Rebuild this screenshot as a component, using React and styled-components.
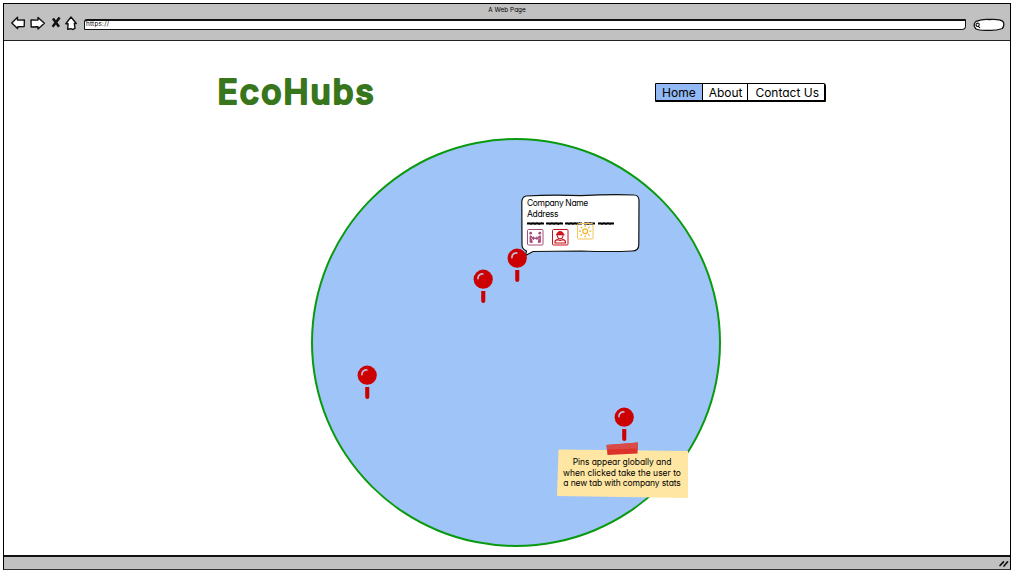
import React from "react";
import styled, { createGlobalStyle } from "styled-components";

const GlobalStyle = createGlobalStyle`
  * { box-sizing: border-box; }
  body { margin: 0; background: #fff; overflow: hidden; }
  #root {
    font-family: Inter, "Liberation Sans", sans-serif;
    font-feature-settings: "cv11";
    color: #000;
  }
`;

const BrowserWindow = styled.div`
  display: flex;
  flex-direction: column;
  width: 1008px;
  height: 567px;
  margin: 3px 0 0 3px;
  border: 1.5px solid #000;
  border-bottom-color: #333;
`;

const Chrome = styled.header`
  flex: 0 0 37px;
  background: #c1c1c1;
  border-bottom: 1px solid #222;
`;

const WindowTitle = styled.div`
  height: 12px;
  line-height: 12px;
  text-align: center;
  font-size: 6.4px;
  letter-spacing: 0.05px;
`;

const ToolRow = styled.div`
  display: flex;
  align-items: center;
  height: 16px;
  padding: 0 4px 0 7px;
`;

const Tools = styled.svg`
  display: block;
  width: 68px;
  height: 16px;
  margin: -1px 5px 0 0;
`;

const AddressBar = styled.div`
  width: 882px;
  height: 11px;
  margin-top: 1px;
  padding-left: 1px;
  background: #fff;
  border: 1.3px solid #111;
  border-top-width: 2px;
  border-radius: 3px 1px 4px 1px;
  font-size: 6.4px;
  line-height: 7px;
  letter-spacing: 0.2px;
`;

const SearchBox = styled.svg`
  display: block;
  width: 32px;
  height: 14px;
  margin: 1px 0 0 7px;
`;

const Page = styled.main`
  flex: 1;
  background: #fff;
`;

const Header = styled.div`
  display: flex;
  justify-content: space-between;
  height: 97px;
  padding: 34px 184px 0 214px;
`;

const Brand = styled.h1`
  margin: 0;
  width: 160px;
  height: 36px;
`;

const BrandMark = styled.svg`
  display: block;
  width: 160px;
  height: 36px;
  overflow: visible;
  font-size: 33.5px;
  font-weight: 500;
  fill: #38761d;
  stroke: #38761d;
  stroke-width: 2.2px;
  stroke-linejoin: round;
`;

const Nav = styled.nav`
  display: flex;
  width: 171px;
  height: 19px;
  margin-top: 8px;
  border: 1px solid #000;
  border-width: 1px 2px 2px 1px;
  border-radius: 1px 3px 1px 1px;
`;

const NavItem = styled.a`
  width: ${(p) => p.$width}px;
  padding-left: ${(p) => p.$inset || 0}px;
  background: ${(p) => (p.$active ? "#92b9f4" : "#fff")};
  border-right: ${(p) => (p.$last ? 0 : "1px solid #000")};
  text-align: center;
  white-space: nowrap;
  font-size: 12px;
  line-height: 17px;
`;

const Globe = styled.section`
  position: relative;
  width: 410px;
  height: 409px;
  margin-left: 307px;
  border: 2px solid #0a9a0f;
  border-radius: 50%;
  background: #9fc4f8;
`;

const PinMark = styled.svg`
  position: absolute;
  left: ${(p) => p.$x}px;
  top: ${(p) => p.$y}px;
  width: 20px;
  height: 35px;
`;

const Callout = styled.div`
  position: absolute;
  left: 208px;
  top: 54px;
  width: 120px;
  height: 65px;
  padding: 4px 0 0 6px;
  font-size: 8.5px;
  line-height: 11px;
`;

const CalloutShape = styled.svg`
  position: absolute;
  inset: 0;
  width: 120px;
  height: 65px;
`;

const CalloutLine = styled.div`
  position: relative;
  white-space: nowrap;
  letter-spacing: ${(p) => p.$track || 0}px;
`;

const Scribble = styled.svg`
  position: relative;
  display: block;
  width: 90px;
  height: 5px;
  margin-top: 1px;
`;

const IconRow = styled.div`
  position: relative;
  display: flex;
  gap: 8px;
  padding-top: 3px;
`;

const Badge = styled.svg`
  width: 17px;
  height: 17px;
  margin-top: ${(p) => p.$shift}px;
`;

const Note = styled.div`
  position: absolute;
  left: 244px;
  top: 301px;
  width: 132px;
  height: 58px;
  padding-top: 16px;
  text-align: center;
  font-size: 8.5px;
  line-height: 10.5px;
`;

const NoteShape = styled.svg`
  position: absolute;
  inset: 0;
  width: 132px;
  height: 58px;
`;

const NoteLine = styled.div`
  position: relative;
  left: -1px;
  white-space: nowrap;
  letter-spacing: ${(p) => p.$track || 0}px;
`;

const StatusBar = styled.footer`
  display: flex;
  justify-content: flex-end;
  flex: 0 0 14px;
  background: #c1c1c1;
  border-top: 2px solid #111;
`;

const Grip = styled.svg`
  width: 12px;
  height: 12px;
`;

function Pin({ x, y }) {
  return (
    <PinMark $x={x} $y={y} viewBox="0 0 20 35">
      <circle cx="10.2" cy="10.2" r="9.6" fill="#c00" />
      <path d="M4.9 9.6C5 7 6.8 4.9 9.8 4.9" fill="none" stroke="#c3b5d4" strokeWidth="1.7" strokeLinecap="round" />
      <path d="M8.2 22H12.3V32Q12.3 34 10.3 34T8.2 32Z" fill="#c00" />
    </PinMark>
  );
}

function PeopleBadge() {
  return (
    <Badge viewBox="0 0 17 17" fill="none" stroke="#a64d79">
      <rect x=".5" y=".5" width="15.5" height="15.5" rx="1" fill="#fff" />
      <g fill="#a64d79" stroke="none">
        <circle cx="3.7" cy="4.2" r="1.4" />
        <circle cx="12.8" cy="4.2" r="1.4" />
      </g>
      <path d="M3.4 6.5V13.8M4.3 10L5 13.8M3.6 7L5.6 9.2H10.9L12.9 7M13.1 6.5V13.8M12.2 10L11.5 13.8" strokeWidth="1.6" />
      <path d="M6.6 7.4V11M9.9 7.4V11" />
    </Badge>
  );
}

function WorkerBadge() {
  return (
    <Badge viewBox="0 0 17 17" fill="none" stroke="#c9131c">
      <rect x=".5" y=".5" width="15.5" height="15.5" rx="1" fill="#fff" />
      <path d="M5 5.5C5 1.5 11.4 1.5 11.4 5.5Z" fill="#d11" />
      <path d="M4 5.7H12.5" strokeWidth="1.2" />
      <path d="M5.4 6.3C5.4 11 11 11 11 6.3" strokeWidth="1.1" />
      <path d="M3 14V12.8Q3 11 6 10.6Q8.2 12.4 10.5 10.6Q13.4 11 13.4 12.8V14Z" strokeWidth="1.2" />
    </Badge>
  );
}

function SunBadge() {
  return (
    <Badge $shift={-6} viewBox="0 0 17 17" fill="none" stroke="#efb52a">
      <rect x=".5" y=".5" width="15.5" height="15.5" rx="1" stroke="#f3c65b" />
      <circle cx="8.2" cy="8.2" r="2.4" strokeWidth="1.2" />
      <path d="M8.2 2V4M8.2 12.4V14.4M2 8.2H4M12.4 8.2H14.4M3.8 3.8L5.2 5.2M11.2 11.2L12.6 12.6M12.6 3.8L11.2 5.2M3.8 12.6L5.2 11.2" strokeWidth="1.2" />
    </Badge>
  );
}

export default function App() {
  return (
    <>
      <GlobalStyle />
      <BrowserWindow>
        <Chrome>
          <WindowTitle>A Web Page</WindowTitle>
          <ToolRow>
            <Tools viewBox="0 0 68 16" fill="#fff" stroke="#111" strokeWidth="1.4" strokeLinejoin="round">
              <path d="M.8 7L6.5 1.2V4.1L13.4 3.9L13.2 10.5L6.8 10.8L6.5 12.6Z" />
              <path d="M33.4 7.3L27 1.4V4.1L20 3.9L20.2 11L27 10.7V13Z" />
              <path d="M42 2.4L48 10.8M48.6 1.6L41.6 10.8" strokeWidth="2.5" fill="none" />
              <path d="M60 1L65.3 7.5H63.3L64 12.4L61.5 13.5L60 12.7L56.7 13.2L57.1 7.7H54.8Z" />
            </Tools>
            <AddressBar>https://</AddressBar>
            <SearchBox viewBox="0 0 32 14">
              <path d="M3 3.4Q10 .8 16 1.5Q27 .8 30 3.6Q32 7 29.3 10.5Q23 12.8 14 12.3Q6 12.5 3 11Q-.8 7 3 3.4Z" fill="#fff" stroke="#111" strokeWidth="1.3" />
              <path d="M3 7.2Q3 5 4.7 5Q6.5 5.1 6.1 7Q5.8 8.8 4 8.5ZM5.2 8.2L7 9.8" fill="none" stroke="#111" strokeWidth="1.1" />
            </SearchBox>
          </ToolRow>
        </Chrome>
        <Page>
          <Header>
            <Brand>
              <BrandMark viewBox="0 0 160 36">
                <text x="-0.5" y="28.8" textLength="156">EcoHubs</text>
              </BrandMark>
            </Brand>
            <Nav>
              <NavItem $width={47} $active>Home</NavItem>
              <NavItem $width={46} $inset={1}>About</NavItem>
              <NavItem $width={76} $inset={2} $last>Contact Us</NavItem>
            </Nav>
          </Header>
          <Globe>
            <Callout>
              <CalloutShape viewBox="0 0 120 65">
                <path d="M5 2Q30 .6 60 1.6Q90 .2 113 1Q118 1 118 7L117.8 50Q118 57 111 57Q90 58 60 57L12 57.5L4.5 61.5L5.5 57Q1 55 1 51L.8 8Q1 3 5 2Z" fill="#fff" stroke="#111" strokeWidth="1.2" />
              </CalloutShape>
              <CalloutLine $track={-0.36}>Company Name</CalloutLine>
              <CalloutLine $track={-0.3}>Address</CalloutLine>
              <Scribble viewBox="0 0 90 5">
                <path d="M0 2.5H17M19 2.5H36M38 2.5H55M57 2.5H68M71 2.5H87" fill="none" stroke="#000" strokeWidth="2" />
                <path d="M2 1.6L4 3.6L6 1.6L8 3.6L10 1.6L12 3.6L15 1.6M21 1.6L23 3.6L25 1.6L27 3.6L29 1.6L31 3.6L34 1.6M40 1.6L42 3.6L44 1.6L46 3.6L48 1.6L50 3.6L53 1.6M59 1.6L61 3.6L63 1.6L66 3.6M73 1.6L75 3.6L77 1.6L79 3.6L81 1.6L83 3.6L85 1.6" fill="none" stroke="#000" />
              </Scribble>
              <IconRow>
                <PeopleBadge />
                <WorkerBadge />
                <SunBadge />
              </IconRow>
            </Callout>
            <Pin x={194} y={108} />
            <Pin x={160} y={129} />
            <Pin x={44} y={225} />
            <Pin x={300.5} y={267} />
            <Note>
              <NoteShape viewBox="0 0 132 58">
                <path d="M1.5 8.5L131 10V57L0 55Z" fill="#ffe6a3" />
                <path d="M49.5 4L81 1.5L80.5 12.5L50.5 14Z" fill="#dc3229" />
                <path d="M49.5 4L81 1.5V7.5L50 8.5Z" fill="#d94b47" />
              </NoteShape>
              <NoteLine $track={-0.07}>Pins appear globally and</NoteLine>
              <NoteLine>when clicked take the user to</NoteLine>
              <NoteLine $track={-0.13}>a new tab with company stats</NoteLine>
            </Note>
          </Globe>
        </Page>
        <StatusBar>
          <Grip viewBox="0 0 12 12">
            <path d="M2 8.5L5.5 4.8M6 9L9.6 4.8" stroke="#111" strokeWidth="1.7" strokeLinecap="round" />
          </Grip>
        </StatusBar>
      </BrowserWindow>
    </>
  );
}
